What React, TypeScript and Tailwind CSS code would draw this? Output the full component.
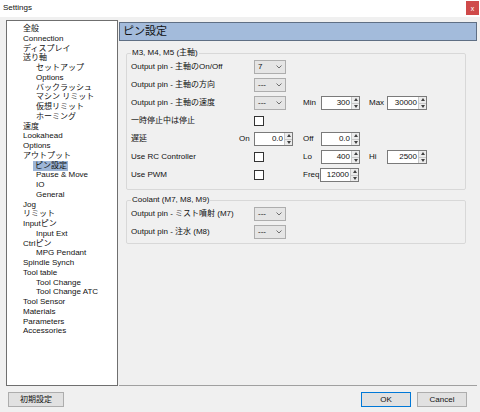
import React from "react";

const treeItems: { label: string; level: number; selected?: boolean }[] = [
  { label: "全般", level: 0 },
  { label: "Connection", level: 0 },
  { label: "ディスプレイ", level: 0 },
  { label: "送り軸", level: 0 },
  { label: "セットアップ", level: 1 },
  { label: "Options", level: 1 },
  { label: "バックラッシュ", level: 1 },
  { label: "マシン リミット", level: 1 },
  { label: "仮想リミット", level: 1 },
  { label: "ホーミング", level: 1 },
  { label: "速度", level: 0 },
  { label: "Lookahead", level: 0 },
  { label: "Options", level: 0 },
  { label: "アウトプット", level: 0 },
  { label: "ピン設定", level: 1, selected: true },
  { label: "Pause & Move", level: 1 },
  { label: "IO", level: 1 },
  { label: "General", level: 1 },
  { label: "Jog", level: 0 },
  { label: "リミット", level: 0 },
  { label: "Inputピン", level: 0 },
  { label: "Input Ext", level: 1 },
  { label: "Ctrlピン", level: 0 },
  { label: "MPG Pendant", level: 1 },
  { label: "Spindle Synch", level: 0 },
  { label: "Tool table", level: 0 },
  { label: "Tool Change", level: 1 },
  { label: "Tool Change ATC", level: 1 },
  { label: "Tool Sensor", level: 0 },
  { label: "Materials", level: 0 },
  { label: "Parameters", level: 0 },
  { label: "Accessories", level: 0 },
];

function Select({ value }: { value: string }) {
  return (
    <div className="w-[32px] h-[14px] bg-[#e5e5e5] border border-[#adadad] flex items-center justify-between pl-[3px] pr-[3px]">
      <span className="leading-none">{value}</span>
      <svg width="6" height="4" viewBox="0 0 6 4">
        <path d="M0.5 0.5 L3 3 L5.5 0.5" fill="none" stroke="#606060" strokeWidth="0.9" />
      </svg>
    </div>
  );
}

function Spin({ value, w = "w-[39px]" }: { value: string; w?: string }) {
  return (
    <div className={`${w} h-[14px] bg-white border border-[#7a7a7a] flex items-stretch`}>
      <span className="flex-1 text-right pr-[1px] leading-[12px]">{value}</span>
      <div className="w-[8px] flex flex-col border-l border-[#c8c8c8] bg-[#ececec]">
        <div className="flex-1 flex items-center justify-center border-b border-[#c8c8c8]">
          <svg width="4" height="3" viewBox="0 0 4 3">
            <path d="M0 3 L2 0 L4 3 Z" fill="#404040" />
          </svg>
        </div>
        <div className="flex-1 flex items-center justify-center">
          <svg width="4" height="3" viewBox="0 0 4 3">
            <path d="M0 0 L2 3 L4 0 Z" fill="#404040" />
          </svg>
        </div>
      </div>
    </div>
  );
}

function Check() {
  return <div className="w-[10px] h-[10px] bg-white border border-[#333333]" />;
}

function Row({ children }: { children: React.ReactNode }) {
  return <div className="flex items-center h-[18px]">{children}</div>;
}

function Btn({ label, w, primary }: { label: string; w: string; primary?: boolean }) {
  return (
    <div
      className={`${w} h-[15px] flex items-center justify-center bg-[#e1e1e1] border ${
        primary ? "border-[#0078d7]" : "border-[#adadad]"
      }`}
    >
      {label}
    </div>
  );
}

export default function App() {
  return (
    <div
      className="w-[480px] h-[412px] bg-[#f0f0f0] flex flex-col text-[8px] text-[#111111] overflow-hidden"
      style={{ fontFamily: '"Liberation Sans", "Noto Sans CJK JP", sans-serif' }}
    >
      {/* Title bar */}
      <div className="h-[17px] bg-white flex items-start justify-between">
        <span className="pl-[3px] pt-[4px] leading-none">Settings</span>
        <div className="mt-[1px] mr-[1px] w-[13px] h-[14px] bg-[#cf4a4a] flex items-center justify-center text-white text-[7px] leading-none">
          x
        </div>
      </div>

      <div className="flex flex-1 pt-[3px] pl-[6px] pr-[3px]">
        {/* Tree */}
        <div className="w-[112px] h-[366px] bg-white border border-[#6f6f6f] pt-[3px]">
          {treeItems.map((item, i) => (
            <div
              key={i}
              className={`h-[9.75px] leading-[9.75px] whitespace-nowrap ${item.level === 0 ? "pl-[16px]" : "pl-[29px]"}`}
            >
              <span
                className={
                  item.selected ? "inline-block h-[10px] bg-[#9db5d6] pl-[2px] pr-[1px] -ml-[3px]" : ""
                }
              >
                {item.label}
              </span>
            </div>
          ))}
        </div>

        {/* Right panel */}
        <div className="flex-1 ml-[1px] mt-[2px] h-[364px] flex flex-col border-b border-[#a0a0a0]">
          <div className="h-[19px] bg-[#a3bbdb] border border-[#5f6f84] flex items-center pl-[3px] text-[11px] leading-none">
            ピン設定
          </div>

          <div className="pl-[7px] pr-[11px]">
            <fieldset className="mt-[7px] border border-[#d8d8d8] rounded-[2px] pl-[4px] pb-[5px]">
              <legend className="px-[1px] leading-[10px]">M3, M4, M5 (主軸)</legend>
              <Row>
                <span className="w-[123px]">Output pin - 主軸のOn/Off</span>
                <Select value="7" />
              </Row>
              <Row>
                <span className="w-[123px]">Output pin - 主軸の方向</span>
                <Select value="---" />
              </Row>
              <Row>
                <span className="w-[123px]">Output pin - 主軸の速度</span>
                <div className="w-[49px]">
                  <Select value="---" />
                </div>
                <span className="w-[18px]">Min</span>
                <div className="w-[48px]">
                  <Spin value="300" />
                </div>
                <span className="w-[18px]">Max</span>
                <Spin value="30000" w="w-[40px]" />
              </Row>
              <Row>
                <span className="w-[123px]">一時停止中は停止</span>
                <Check />
              </Row>
              <Row>
                <span className="w-[108px]">遅延</span>
                <span className="w-[15px]">On</span>
                <div className="w-[49px]">
                  <Spin value="0.0" />
                </div>
                <span className="w-[18px]">Off</span>
                <Spin value="0.0" />
              </Row>
              <Row>
                <span className="w-[123px]">Use RC Controller</span>
                <div className="w-[49px]">
                  <Check />
                </div>
                <span className="w-[18px]">Lo</span>
                <div className="w-[48px]">
                  <Spin value="400" />
                </div>
                <span className="w-[18px]">Hi</span>
                <Spin value="2500" w="w-[40px]" />
              </Row>
              <Row>
                <span className="w-[123px]">Use PWM</span>
                <div className="w-[49px]">
                  <Check />
                </div>
                <span className="w-[17px]">Freq</span>
                <Spin value="12000" />
              </Row>
            </fieldset>

            <fieldset className="mt-[5px] border border-[#d8d8d8] rounded-[2px] pl-[4px] pb-[2px]">
              <legend className="px-[1px] leading-[10px]">Coolant (M7, M8, M9)</legend>
              <Row>
                <span className="w-[123px]">Output pin - ミスト噴射 (M7)</span>
                <Select value="---" />
              </Row>
              <Row>
                <span className="w-[123px]">Output pin - 注水 (M8)</span>
                <Select value="---" />
              </Row>
            </fieldset>
          </div>
        </div>
      </div>

      {/* Bottom buttons */}
      <div className="h-[26px] flex items-start pt-[6px] pl-[8px] pr-[13px]">
        <Btn label="初期設定" w="w-[56px]" />
        <div className="flex-1" />
        <Btn label="OK" w="w-[50px]" primary />
        <div className="w-[6px]" />
        <Btn label="Cancel" w="w-[50px]" />
      </div>
    </div>
  );
}
